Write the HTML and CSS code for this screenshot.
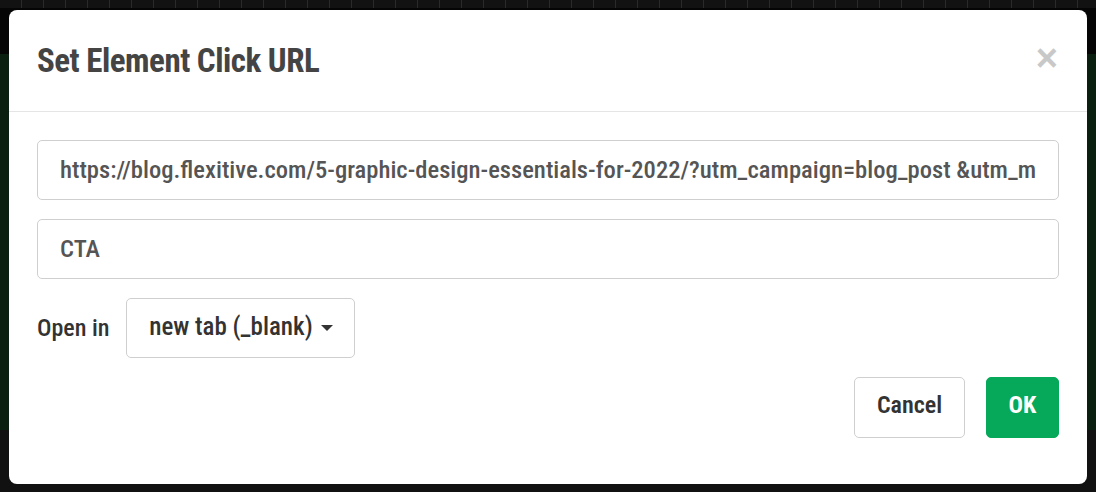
FILE: index.html
```html
<!DOCTYPE html>
<html>
<head>
<meta charset="utf-8">
<link rel="stylesheet" href="styles.css">
</head>
<body>
<div class="backdrop">
  <div class="modal">
    <div class="modal-header">
      <h2 class="title">Set Element Click URL</h2>
      <span class="close">&times;</span>
    </div>
    <div class="modal-body">
      <div class="field">https://blog.flexitive.com/5-graphic-design-essentials-for-2022/?utm_campaign=blog_post &amp;utm_m</div>
      <div class="field">CTA</div>
      <div class="open-row">
        <span class="open-label">Open in</span>
        <div class="select">new tab (_blank) <span class="caret"></span></div>
      </div>
      <div class="actions">
        <button class="btn btn-default">Cancel</button>
        <button class="btn btn-ok">OK</button>
      </div>
    </div>
  </div>
</div>
</body>
</html>
```
FILE: styles.css
```css
* { box-sizing: border-box; }
html, body { margin: 0; padding: 0; }
body {
  width: 1096px;
  height: 492px;
  overflow: hidden;
  font-family: "Roboto", "DejaVu Sans Condensed", sans-serif;
  font-stretch: 75%;
}
.backdrop {
  width: 1096px;
  height: 492px;
  padding: 10px 9px 0 9px;
  background:
    repeating-linear-gradient(90deg, transparent 0 21px, #2a2a2a 21px 22px) 0 0 / 100% 8px no-repeat,
    linear-gradient(#121212 0 8px, #050505 8px 54px, #0b1f11 54px 430px, #111 430px 492px);
}
.modal {
  width: 1078px;
  height: 474px;
  background: #fff;
  border-radius: 8px;
  display: flex;
  flex-direction: column;
}
.modal-header {
  height: 102px;
  border-bottom: 1px solid #e5e5e5;
  display: flex;
  align-items: center;
  justify-content: space-between;
  padding: 0 28px 0 28px;
}
.title {
  margin: 0;
  font-size: 33px;
  letter-spacing: -0.5px;
  font-weight: bold;
  color: #444;
}
.close {
  color: #c8c8c8;
  font-size: 38px;
  font-weight: bold;
  font-family: "Liberation Sans", sans-serif;
  font-stretch: normal;
  line-height: 1;
  margin-top: -6px;
  margin-right: 1px;
}
.modal-body {
  padding: 28px 28px 0 28px;
  display: flex;
  flex-direction: column;
  gap: 19px;
}
.field {
  height: 60px;
  border: 1px solid #cfcfcf;
  border-radius: 5px;
  padding: 0 22px 2px;
  display: flex;
  align-items: center;
  font-size: 24.6px;
  font-weight: 500;
  color: #555;
  white-space: nowrap;
  overflow: hidden;
}
.open-row {
  display: flex;
  align-items: center;
  gap: 17px;
}
.open-label {
  font-size: 24px;
  font-weight: 500;
  color: #333;
}
.select {
  height: 60px;
  width: 229px;
  border: 1px solid #cfcfcf;
  border-radius: 5px;
  display: flex;
  align-items: center;
  justify-content: center;
  gap: 8px;
  font-size: 25px;
  font-weight: 500;
  color: #333;
  padding-bottom: 4px;
}
.caret {
  width: 0;
  height: 0;
  border-left: 6px solid transparent;
  border-right: 6px solid transparent;
  border-top: 6px solid #333;
  margin-top: 4px;
}
.actions {
  display: flex;
  justify-content: flex-end;
  gap: 21px;
}
.btn {
  height: 61px;
  border-radius: 5px;
  font-family: inherit;
  font-stretch: 75%;
  font-size: 24px;
  font-weight: 600;
  padding: 0 0 5px;
  display: flex;
  align-items: center;
  justify-content: center;
}
.btn-default {
  width: 111px;
  background: #fff;
  border: 1px solid #cfcfcf;
  color: #333;
}
.btn-ok {
  width: 73px;
  background: #06a85a;
  border: 1px solid #06a85a;
  color: #fff;
  font-weight: bold;
}
```
